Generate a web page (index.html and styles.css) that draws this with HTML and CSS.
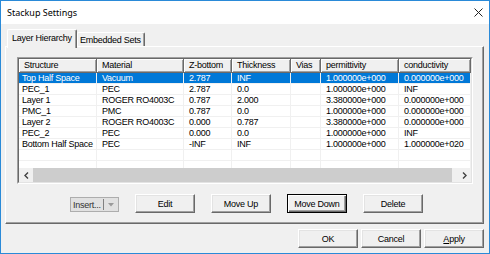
FILE: index.html
```html
<!DOCTYPE html>
<html>
<head>
<meta charset="utf-8">
<title>Stackup Settings</title>
<link rel="stylesheet" href="styles.css">
</head>
<body>
<div class="window">
  <div class="titlebar">
    <span class="title">Stackup Settings</span>
    <svg class="close" width="9" height="9" viewBox="0 0 9 9"><path d="M0.5 0.5 L8.5 8.5 M8.5 0.5 L0.5 8.5" stroke="#222" stroke-width="1" fill="none"/></svg>
  </div>
  <div class="body">
    <div class="tabs">
      <div class="tab active">Layer Hierarchy</div>
      <div class="tab">Embedded Sets</div>
    </div>
    <div class="panel">
      <div class="list">
        <div class="list-inner">
          <div class="header">
            <div class="hcell c1">Structure</div>
            <div class="hcell c2">Material</div>
            <div class="hcell c3">Z-bottom</div>
            <div class="hcell c4">Thickness</div>
            <div class="hcell c5">Vias</div>
            <div class="hcell c6">permittivity</div>
            <div class="hcell c7">conductivity</div>
          </div>
          <div class="rows">
            <div class="row selected"><div class="cell c1">Top Half Space</div><div class="cell c2">Vacuum</div><div class="cell c3">2.787</div><div class="cell c4">INF</div><div class="cell c5"></div><div class="cell c6">1.000000e+000</div><div class="cell c7">0.000000e+000</div></div>
            <div class="row"><div class="cell c1">PEC_1</div><div class="cell c2">PEC</div><div class="cell c3">2.787</div><div class="cell c4">0.0</div><div class="cell c5"></div><div class="cell c6">1.000000e+000</div><div class="cell c7">INF</div></div>
            <div class="row"><div class="cell c1">Layer 1</div><div class="cell c2">ROGER RO4003C</div><div class="cell c3">0.787</div><div class="cell c4">2.000</div><div class="cell c5"></div><div class="cell c6">3.380000e+000</div><div class="cell c7">0.000000e+000</div></div>
            <div class="row"><div class="cell c1">PMC_1</div><div class="cell c2">PMC</div><div class="cell c3">0.787</div><div class="cell c4">0.0</div><div class="cell c5"></div><div class="cell c6">1.000000e+000</div><div class="cell c7">0.000000e+000</div></div>
            <div class="row"><div class="cell c1">Layer 2</div><div class="cell c2">ROGER RO4003C</div><div class="cell c3">0.000</div><div class="cell c4">0.787</div><div class="cell c5"></div><div class="cell c6">3.380000e+000</div><div class="cell c7">0.000000e+000</div></div>
            <div class="row"><div class="cell c1">PEC_2</div><div class="cell c2">PEC</div><div class="cell c3">0.000</div><div class="cell c4">0.0</div><div class="cell c5"></div><div class="cell c6">1.000000e+000</div><div class="cell c7">INF</div></div>
            <div class="row"><div class="cell c1">Bottom Half Space</div><div class="cell c2">PEC</div><div class="cell c3">-INF</div><div class="cell c4">INF</div><div class="cell c5"></div><div class="cell c6">1.000000e+000</div><div class="cell c7">1.000000e+020</div></div>
            <div class="row"><div class="cell c1"></div><div class="cell c2"></div><div class="cell c3"></div><div class="cell c4"></div><div class="cell c5"></div><div class="cell c6"></div><div class="cell c7"></div></div>
            <div class="row"><div class="cell c1"></div><div class="cell c2"></div><div class="cell c3"></div><div class="cell c4"></div><div class="cell c5"></div><div class="cell c6"></div><div class="cell c7"></div></div>
            <div class="row"><div class="cell c1"></div><div class="cell c2"></div><div class="cell c3"></div><div class="cell c4"></div><div class="cell c5"></div><div class="cell c6"></div><div class="cell c7"></div></div>
          </div>
          <div class="hscroll">
            <div class="arrow"><svg width="5" height="7" viewBox="0 0 5 7"><polyline points="4,0.5 1,3.5 4,6.5" fill="none" stroke="#404040" stroke-width="1.4"/></svg></div>
            <div class="thumb"></div>
            <div class="arrow"><svg width="5" height="7" viewBox="0 0 5 7"><polyline points="1,0.5 4,3.5 1,6.5" fill="none" stroke="#404040" stroke-width="1.4"/></svg></div>
          </div>
        </div>
      </div>
      <div class="actions">
        <div class="split">
          <span class="split-label">Insert...</span>
          <span class="split-div"></span>
          <svg class="split-arrow" width="6" height="4" viewBox="0 0 6 4"><polygon points="0,0 6,0 3,3.5" fill="#9a9a9a"/></svg>
        </div>
        <button class="btn">Edit</button>
        <button class="btn">Move Up</button>
        <button class="btn default">Move Down</button>
        <button class="btn">Delete</button>
      </div>
    </div>
    <div class="footer">
      <button class="btn">OK</button>
      <button class="btn">Cancel</button>
      <button class="btn"><u>A</u>pply</button>
    </div>
  </div>
</div>
</body>
</html>
```
FILE: styles.css
```css
* { box-sizing: border-box; }
html, body { margin: 0; padding: 0; }
body {
  width: 490px;
  height: 254px;
  overflow: hidden;
  background: #ffffff;
  font-family: "Liberation Sans", Arial, sans-serif;
  font-size: 9px;
  letter-spacing: -0.25px;
  color: #000;
}
.window {
  width: 490px;
  height: 254px;
  border: 1px solid #2a8ad8;
  background: #f0f0f0;
  display: flex;
  flex-direction: column;
}
.titlebar {
  height: 23px;
  flex: none;
  background: #ffffff;
  display: flex;
  align-items: center;
  justify-content: space-between;
  padding: 0 6px 0 6px;
}
.title {
  font-family: "Noto Sans", sans-serif;
  font-size: 9px;
  letter-spacing: 0;
  color: #000;
}
.close { display: block; }
.body {
  flex: 1;
  padding: 5px 5px 0 4px;
  display: flex;
  flex-direction: column;
}
.tabs {
  height: 17px;
  display: flex;
  align-items: flex-end;
  padding-left: 2px;
  position: relative;
  z-index: 1;
}
.tab {
  height: 14px;
  width: 68px;
  padding: 2px 0 0 2px;
  line-height: 11px;
  border-top: 1px solid #fff;
  border-left: 1px solid #fff;
  border-right: 1px solid #696969;
  box-shadow: inset -1px 0 #a0a0a0;
  border-radius: 2px 2px 0 0;
  background: #f0f0f0;
  white-space: nowrap;
}
.tab.active {
  width: 70px;
  height: 19px;
  margin-bottom: -2px;
  padding: 3px 0 0 4px;
}
.panel {
  width: 479px;
  height: 178px;
  border-top: 1px solid #fff;
  border-left: 1px solid #fff;
  border-right: 1px solid #696969;
  border-bottom: 1px solid #696969;
  box-shadow: inset -1px -1px #a0a0a0;
  padding: 10px 0 0 11px;
}
.list {
  width: 456px;
  height: 127px;
  border-top: 1px solid #a0a0a0;
  border-left: 1px solid #a0a0a0;
  border-right: 1px solid #fff;
  border-bottom: 1px solid #fff;
}
.list-inner {
  width: 100%;
  height: 100%;
  border-top: 1px solid #696969;
  border-left: 1px solid #696969;
  border-right: 1px solid #e3e3e3;
  border-bottom: 1px solid #e3e3e3;
  background: #fff;
  display: flex;
  flex-direction: column;
  overflow: hidden;
}
.header { display: flex; height: 14px; flex: none; }
.hcell {
  height: 14px;
  padding: 1px 0 0 5px;
  line-height: 11px;
  background: #f0f0f0;
  border-right: 1px solid #696969;
  border-bottom: 1px solid #696969;
  box-shadow: inset 1px 1px #fff, inset -1px -1px #a0a0a0;
  white-space: nowrap;
  overflow: hidden;
}
.c1 { width: 78px; flex: none; }
.c2 { width: 87px; flex: none; }
.c3 { width: 48px; flex: none; }
.c4 { width: 59px; flex: none; }
.c5 { width: 30px; flex: none; }
.c6 { width: 78px; flex: none; }
.c7 { width: 72px; flex: none; }
.rows { flex: 1; overflow: hidden; }
.row { display: flex; height: 11px; }
.cell {
  height: 11px;
  line-height: 10px;
  padding-left: 5px;
  border-right: 1px solid #f0f0f0;
  border-bottom: 1px solid #f0f0f0;
  white-space: nowrap;
  overflow: hidden;
}
.cell.c1 { padding-left: 3px; }
.row.selected .cell { background: #0078d7; color: #fff; }
.hscroll { height: 14px; flex: none; display: flex; background: #f0f0f0; }
.arrow { width: 14px; display: flex; align-items: center; justify-content: center; }
.arrow svg { display: block; }
.thumb { flex: 1; background: #cdcdcd; margin-right: 5px; }
.actions {
  display: flex;
  align-items: flex-start;
  gap: 16px;
  margin-top: 10px;
  padding-left: 53px;
}
.split {
  width: 49px;
  height: 15px;
  margin-top: 3px;
  border: 1px solid #adadad;
  background: #e1e1e1;
  display: flex;
  align-items: center;
  padding-left: 2px;
  color: #333;
}
.split-label { white-space: nowrap; }
.split-div { width: 1px; height: 11px; background: #808080; margin-left: 2px; }
.split-arrow { margin-left: 4px; display: block; }
.btn {
  appearance: none;
  margin: 0;
  padding: 0;
  width: 60px;
  height: 19px;
  font: inherit;
  letter-spacing: inherit;
  color: #000;
  background: #f0f0f0;
  border-top: 1px solid #fff;
  border-left: 1px solid #fff;
  border-right: 1px solid #696969;
  border-bottom: 1px solid #696969;
  box-shadow: inset -1px -1px #a0a0a0, inset 1px 1px #e3e3e3;
  display: flex;
  align-items: center;
  justify-content: center;
}
.btn.default {
  border: 1px solid #000;
  box-shadow: inset 1px 1px #fff, inset -1px -1px #696969, inset -2px -2px #a0a0a0;
}
.footer {
  display: flex;
  justify-content: flex-end;
  gap: 3px;
  margin-top: 5px;
}
```
